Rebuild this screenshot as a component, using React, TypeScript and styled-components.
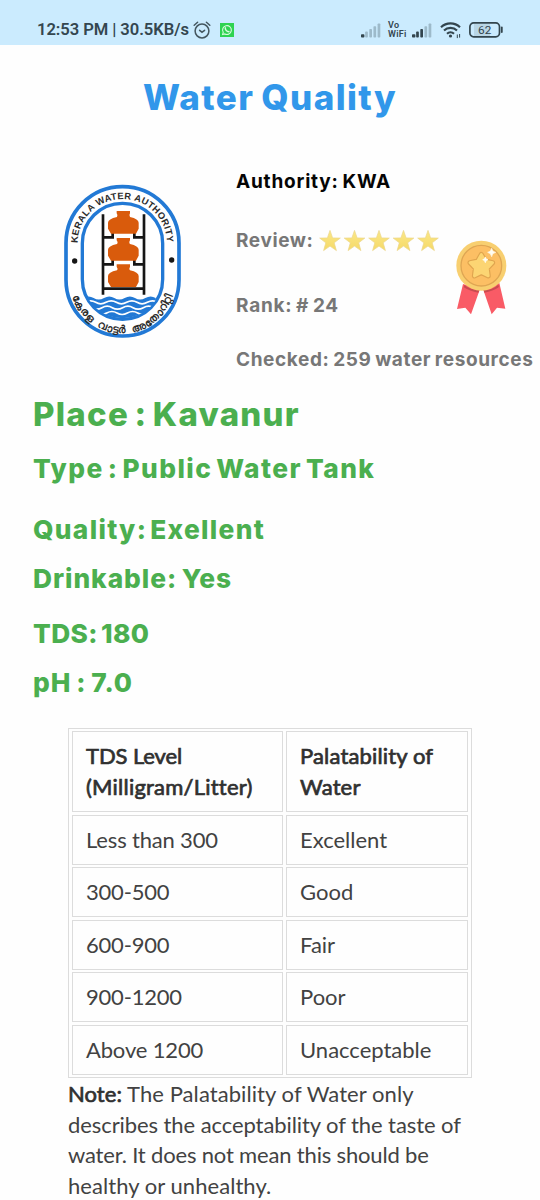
import React from "react";
import styled, { createGlobalStyle } from "styled-components";

const Global = createGlobalStyle`
  body { margin: 0; background: #fefefe; }
  * { box-sizing: border-box; }
`;

const Screen = styled.main`
  width: 540px;
  height: 1200px;
  overflow: hidden;
  background: #fefefe;
  font-family: Inter, "Liberation Sans", sans-serif;
`;

const StatusBar = styled.header`
  height: 45px;
  padding: 15px 36px 0 37px;
  display: flex;
  justify-content: space-between;
  background: #cbebfe;
  color: #34464f;
`;

const StatusGroup = styled.div`
  height: 30px;
  display: flex;
  align-items: center;
`;

const Clock = styled.span`
  font: 600 16.6px/30px Roboto, sans-serif;
  letter-spacing: -0.07px;
  white-space: pre;
`;

const VoWifi = styled.span`
  width: 20px;
  margin: 0 4px 0 7px;
  font: 600 9px/8.6px Roboto, sans-serif;
  letter-spacing: 0.25px;
`;

const Title = styled.h1`
  margin: 0;
  height: 104px;
  text-align: center;
  font-size: 35px;
  line-height: 104px;
  font-weight: 800;
  letter-spacing: 1.4px;
  word-spacing: -2px;
  color: #3197ea;
`;

const Authority = styled.section`
  display: flex;
  height: 226px;
`;

const EmblemBox = styled.div`
  width: 236px;
  padding: 21px 0 0 50px;
`;

const Facts = styled.div`
  display: flex;
  flex-direction: column;
`;

const Fact = styled.div<{ $h: number; $track: number; $dark?: boolean }>`
  height: ${(p) => p.$h}px;
  display: flex;
  align-items: center;
  white-space: nowrap;
  font-size: 19px;
  font-weight: 700;
  letter-spacing: ${(p) => p.$track}px;
  word-spacing: -1.5px;
  color: ${(p) => (p.$dark ? "#050505" : "#777777")};
`;

const RankRow = styled.div`
  display: flex;
`;

const FactColumn = styled.div`
  width: 220px;
`;

const MedalBox = styled.div`
  padding-top: 27px;
`;

const Details = styled.section`
  padding-left: 33px;
  color: #4baf4f;
`;

const Detail = styled.div<{ $top: number; $track: number; $space: number; $size?: number }>`
  margin-top: ${(p) => p.$top}px;
  height: 32px;
  line-height: 32px;
  white-space: nowrap;
  font-size: ${(p) => p.$size ?? 26.3}px;
  font-weight: 800;
  letter-spacing: ${(p) => p.$track}px;
  word-spacing: ${(p) => p.$space}px;
`;

const Reference = styled.section`
  margin: 29px 0 0 68px;
  font: 400 22px/30.7px Lato, sans-serif;
  font-variant-ligatures: none;
  color: #424242;
`;

const Levels = styled.div`
  width: 404px;
  height: 350px;
  padding: 2px 3px;
  display: grid;
  grid-template-columns: 211px 182px;
  grid-template-rows: 81px repeat(5, 50px);
  column-gap: 3px;
  row-gap: 2.6px;
  border: 1px solid #dcdcdc;
`;

const Cell = styled.div<{ $head?: boolean; $track?: number }>`
  padding: 9px 13px 7px;
  border: 1px solid #dcdcdc;
  letter-spacing: ${(p) => p.$track ?? 0}px;
  ${(p) => p.$head && "color: #303030; -webkit-text-stroke: 0.7px #303030;"}
`;

const Note = styled.p`
  margin: 0;
  padding-top: 1px;
  white-space: nowrap;
`;

const NoteLine = styled.span<{ $track: number }>`
  display: block;
  letter-spacing: ${(p) => p.$track}px;
`;

const NoteLabel = styled.span`
  color: #303030;
  -webkit-text-stroke: 0.7px #303030;
`;

const Alarm = () => (
  <svg width="18" height="18" viewBox="0 0 18 18" fill="none" stroke="#44565f" strokeWidth="1.5" strokeLinecap="round" style={{ marginLeft: 4 }}>
    <circle cx="9" cy="10" r="6.9" />
    <path d="M1.2 4.2 4.6 1.3M16.8 4.2 13.4 1.3M6.6 9.3 9 11.2 11.6 9.3" />
  </svg>
);

const Chat = () => (
  <svg width="14" height="14" viewBox="0 0 14 14" style={{ marginLeft: 9 }}>
    <rect width="14" height="14" fill="#2fd351" />
    <path d="M2.6 11.5 3.2 9.3A4.4 4.4 0 1 1 4.9 10.9Z" fill="none" stroke="#d8fbdc" strokeWidth="1.1" />
    <path d="M5.4 4.9c-.6 1.5 1.7 4 3.5 3.7" fill="none" stroke="#d8fbdc" strokeWidth="1.5" strokeLinecap="round" />
  </svg>
);

const Signal = ({ level }: { level: number }) => (
  <svg width="20" height="15" viewBox="0 0 20 15">
    {[3.3, 6, 8.6, 11.4, 14.2].map((h, i) => (
      <rect key={h} x={i * 4.15} y={14.6 - h} width={i === 0 ? 3.4 : 2.7} height={h} rx="0.8" fill={i < level ? "#33454e" : "#9dbaca"} />
    ))}
  </svg>
);

const Wifi = () => (
  <svg width="22" height="17" viewBox="0 0 22 17" fill="none" stroke="#33454e" strokeWidth="2.1" style={{ marginLeft: 8 }}>
    <path d="M1 5.2a13.6 13.6 0 0 1 19 0M4 8.6a9.2 9.2 0 0 1 13 0M7 11.8a5 5 0 0 1 7 0" />
    <circle cx="10.5" cy="14" r="1.6" fill="#33454e" stroke="none" />
    <path d="M17.3 12.5v3.6M19.6 12v3.6" strokeWidth="1" />
  </svg>
);

const Battery = () => (
  <svg width="35" height="16" viewBox="0 0 35 16" style={{ marginLeft: 7 }}>
    <rect x="5" y="2" width="16" height="12" fill="#b9d6e6" />
    <rect x="0.9" y="0.9" width="29.6" height="13.9" rx="3.8" fill="none" stroke="#33454e" strokeWidth="1.7" />
    <path d="M32.8 5.5v4.6" stroke="#33454e" strokeWidth="1.8" strokeLinecap="round" />
    <text x="15.7" y="12.1" textAnchor="middle" fontFamily="Roboto" fontSize="11.8" fontWeight="400" fill="#33454e">62</text>
  </svg>
);

const pot = "M200 123H240V130Q236 137 240 141Q266 147 266 158V176L258 191H183L174 176V158Q174 147 201 141Q205 137 200 130Z";
const wave = "q16-9 31 0t31 0t31 0t31 0t31 0t31 0t31 0";

const Emblem = () => (
  <svg width="145" height="180" viewBox="0 0 435 540">
    <defs>
      <clipPath id="basin">
        <rect x="100" y="103" width="235" height="342" rx="117" />
      </clipPath>
      <path id="upperArc" d="M83 219A134 132 0 0 1 351 219" />
      <path id="lowerArc" d="M61 350A157 157 0 0 0 373 350" />
    </defs>
    <rect x="48" y="50" width="339" height="448" rx="169" fill="#fff" stroke="#2279d5" strokeWidth="11" />
    <rect x="97" y="100" width="241" height="348" rx="120" fill="#fff" stroke="#2279d5" strokeWidth="10" />
    <g clipPath="url(#basin)">
      <path d={`M100 384${wave}V450H100Z`} fill="#2279d5" />
      {[397, 413, 429].map((y, i) => (
        <path key={y} d={`M${[106, 94, 108][i]} ${y}${wave}`} fill="none" stroke="#fff" strokeWidth="5" />
      ))}
    </g>
    <path d="M159 133V374M282 133V374M159 356H282M159 202H188V188M282 202H253V188M159 283H188V269M282 283H253V269" fill="none" stroke="#161616" strokeWidth="8" />
    {[0, 81, 160].map((y) => (
      <path key={y} d={pot} transform={`translate(0 ${y})`} fill="#d95b0c" />
    ))}
    <circle cx="74" cy="273" r="8" fill="#161616" />
    <circle cx="365" cy="270" r="8" fill="#161616" />
    <text fontFamily="Liberation Sans" fontSize="28" fontWeight="700" fill="#2b2b2b" textLength="415">
      <textPath href="#upperArc">KERALA WATER AUTHORITY</textPath>
    </text>
    <text fontFamily="sans-serif" fontSize="32" fontWeight="700" fill="#2b2b2b" wordSpacing="12">
      <textPath href="#lowerArc" startOffset="50%" textAnchor="middle">കേരള വാട്ടർ അതോറിറ്റി</textPath>
    </text>
  </svg>
);

const Stars = () => (
  <svg width="122" height="24" viewBox="0 0 122 24" style={{ marginLeft: 5 }}>
    <defs>
      <linearGradient id="starGold" x1="0" y1="0" x2="0" y2="1">
        <stop offset="0" stopColor="#fbe886" />
        <stop offset="1" stopColor="#f5d969" />
      </linearGradient>
    </defs>
    {[0, 1, 2, 3, 4].map((i) => (
      <path
        key={i}
        transform={`translate(${i * 24.5 + 11} 0.8)`}
        d="M0 1.6 2.6 9.1 10.3 9.3 4.2 14 6.4 21.8 0 17.3 -6.4 21.8 -4.2 14 -10.3 9.3 -2.6 9.1Z"
        fill="url(#starGold)"
        stroke="#ebd68a"
        strokeWidth="0.7"
      />
    ))}
  </svg>
);

const Medal = () => (
  <svg width="52" height="76" viewBox="49 33 156 228">
    <path d="M70 165 52 240 77 236 94 256 121 180ZM179 162 197 239 172 236 156 256 130 180Z" fill="#f95b66" />
    <path d="M74 168Q92 183 119 184L116 191Q90 187 72 175ZM176 167Q160 182 132 184L134 191Q160 187 178 174Z" fill="#c94b50" />
    <circle cx="125" cy="110" r="75" fill="#f8cf70" />
    <circle cx="125" cy="110" r="61" fill="#fcbf64" stroke="#dfa653" strokeWidth="4" />
    <path d="M125 76 136 96 159 101 143 118 146 141 125 131 104 141 107 118 91 101 114 96Z" fill="#fcd56f" stroke="#e0a54f" strokeWidth="15" strokeLinejoin="round" />
    <path d="M125 76 136 96 159 101 143 118 146 141 125 131 104 141 107 118 91 101 114 96Z" fill="#fcd573" stroke="#fcd573" strokeWidth="8" strokeLinejoin="round" />
    <path d="M156 58Q157 69 168 70Q157 72 156 83Q154 72 144 70Q154 69 156 58ZM137 84Q138 91 145 92Q138 94 137 101Q136 94 129 92Q136 91 137 84Z" fill="#fffdf3" stroke="#fffdf3" strokeWidth="2" />
  </svg>
);

const rows: [string, string, number][] = [
  ["Less than 300", "Excellent", -0.17],
  ["300-500", "Good", -0.2],
  ["600-900", "Fair", -0.2],
  ["900-1200", "Poor", -0.2],
  ["Above 1200", "Unacceptable", -0.15],
];

export default function App() {
  return (
    <Screen>
      <Global />
      <StatusBar>
        <StatusGroup>
          <Clock>12:53 PM | 30.5KB/s</Clock>
          <Alarm />
          <Chat />
        </StatusGroup>
        <StatusGroup>
          <Signal level={1} />
          <VoWifi>Vo<br />WiFi</VoWifi>
          <Signal level={3} />
          <Wifi />
          <Battery />
        </StatusGroup>
      </StatusBar>

      <Title>Water Quality</Title>

      <Authority>
        <EmblemBox>
          <Emblem />
        </EmblemBox>
        <Facts>
          <Fact $h={64} $track={0.8} $dark>Authority: KWA</Fact>
          <RankRow>
            <FactColumn>
              <Fact $h={54} $track={0.6}>Review:<Stars /></Fact>
              <Fact $h={76} $track={0.75}>Rank: # 24</Fact>
            </FactColumn>
            <MedalBox>
              <Medal />
            </MedalBox>
          </RankRow>
          <Fact $h={32} $track={0.62}>Checked: 259 water resources</Fact>
        </Facts>
      </Authority>

      <Details>
        <Detail $top={23} $track={1.25} $space={-3} $size={33}>Place : Kavanur</Detail>
        <Detail $top={23} $track={1.45} $space={-3.2}>Type : Public Water Tank</Detail>
        <Detail $top={28.5} $track={1.3} $space={-4}>Quality: Exellent</Detail>
        <Detail $top={17.5} $track={0.95} $space={-2}>Drinkable: Yes</Detail>
        <Detail $top={23} $track={0.35} $space={-3}>TDS: 180</Detail>
        <Detail $top={17} $track={1} $space={-2}>pH : 7.0</Detail>
      </Details>

      <Reference>
        <Levels>
          <Cell $head $track={0.22}>
            <NoteLine $track={-0.1}>TDS Level</NoteLine>(Milligram/Litter)
          </Cell>
          <Cell $head $track={0.15}>Palatability of<br />Water</Cell>
          {rows.map(([level, taste, track]) => (
            <React.Fragment key={level}>
              <Cell $track={track}>{level}</Cell>
              <Cell>{taste}</Cell>
            </React.Fragment>
          ))}
        </Levels>
        <Note>
          <NoteLine $track={0.07}><NoteLabel>Note:</NoteLabel> The Palatability of Water only</NoteLine>
          <NoteLine $track={-0.08}>describes the acceptability of the taste of</NoteLine>
          <NoteLine $track={-0.17}>water. It does not mean this should be</NoteLine>
          <NoteLine $track={0.05}>healthy or unhealthy.</NoteLine>
        </Note>
      </Reference>
    </Screen>
  );
}
